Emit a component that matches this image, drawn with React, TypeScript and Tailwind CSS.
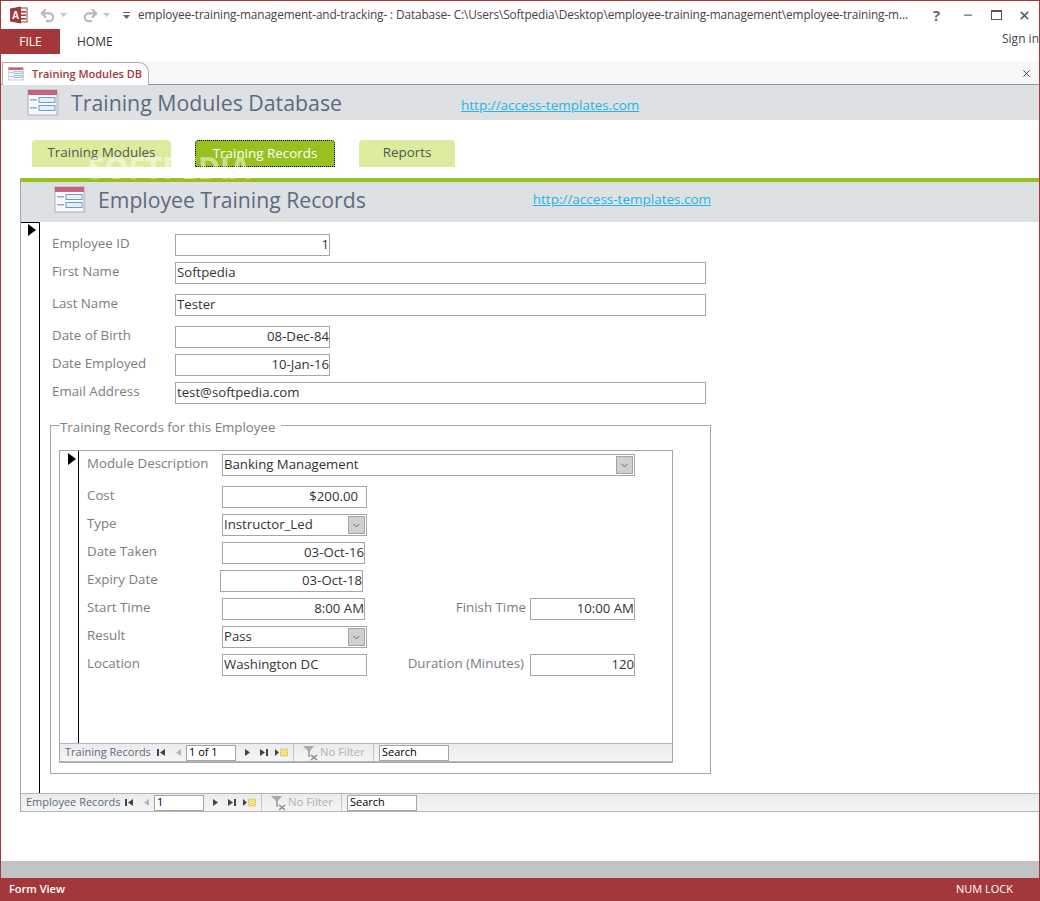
import React from "react";
import { Undo2, Redo2, X, Minus, ChevronDown } from "lucide-react";

const FormIcon = ({ className }: { className: string }) => (
  <svg viewBox="0 0 32 28" className={className}>
    <rect x="1" y="1" width="29" height="25" fill="#f7f9fc" stroke="#a7adb8" />
    <rect x="1" y="1" width="29" height="5" fill="#c9627f" />
    <rect x="30" y="3" width="1.5" height="24" fill="#c5c8cc" />
    <rect x="3" y="10" width="7" height="1.5" fill="#8fb0d0" />
    <rect x="3" y="18" width="7" height="1.5" fill="#8fb0d0" />
    <rect x="12" y="8.5" width="16" height="5" fill="#e6eef7" stroke="#6d9cc8" />
    <rect x="12" y="16.5" width="16" height="5" fill="#e6eef7" stroke="#6d9cc8" />
  </svg>
);

const AccessLogo = () => (
  <svg viewBox="0 0 18 18" className="w-[18px] h-[18px]">
    <rect x="7" y="2" width="10" height="14" fill="#fff" stroke="#a4373a" />
    <rect x="9" y="5" width="7" height="1.5" fill="#a4373a" />
    <rect x="9" y="8.5" width="7" height="1.5" fill="#a4373a" />
    <rect x="9" y="12" width="7" height="1.5" fill="#a4373a" />
    <path d="M0 2.5 L11 0.5 V17.5 L0 15.5 Z" fill="#a4373a" />
    <text x="5.5" y="13" textAnchor="middle" fontSize="10" fontWeight="700" fill="#fff" fontFamily="Liberation Sans, sans-serif">A</text>
  </svg>
);

const Caret = ({ ml }: { ml: string }) => (
  <svg viewBox="0 0 7 4" className={`w-[7px] h-[4px] ${ml} mr-[1px]`}><path d="M0 0 H7 L3.5 4 Z" fill="#c4c4c4" /></svg>
);

const Field = ({ value, w, right, pr = "pr-0", ml = "" }: { value: string; w: string; right?: boolean; pr?: string; ml?: string }) => (
  <div className={`${w} ${ml} ${pr} h-[22px] border border-[#a6a6a6] bg-white flex items-center pl-[1px] text-[13.2px] text-[#333] ${right ? "justify-end" : ""}`}>
    {value}
  </div>
);

const ComboField = ({ value, w }: { value: string; w: string }) => (
  <div className={`${w} h-[22px] border border-[#a6a6a6] bg-white flex items-center pl-[1px] text-[13.2px] text-[#333]`}>
    <span className="flex-1">{value}</span>
    <span className="w-[17px] h-[18px] mr-[1px] bg-[#d0d0d0] border border-[#a6a6a6] flex items-center justify-center">
      <ChevronDown size={11} className="text-[#555]" />
    </span>
  </div>
);

const Label = ({ text, w }: { text: string; w: string }) => (
  <div className={`${w} shrink-0 text-[13.3px] text-[#7b7d80] -mt-[3px]`}>{text}</div>
);

const NavBar = ({ label, record, labelW }: { label: string; record: string; labelW: string }) => (
  <div className="h-[19px] shrink-0 bg-gradient-to-b from-[#e9ebee] to-[#f4f5f6] border-t border-b border-[#b5b5b5] flex items-center text-[11px] text-[#5f6b78]">
    <span className={`${labelW} pl-[5px] shrink-0`}>{label}</span>
    <svg viewBox="0 0 9 9" className="w-[9px] h-[9px] text-[#444]" fill="currentColor"><rect x="0" y="1" width="2" height="7" /><path d="M8 1 V8 L3 4.5 Z" /></svg>
    <svg viewBox="0 0 9 9" className="w-[9px] h-[9px] ml-[8px] text-[#b5b5b5]" fill="currentColor"><path d="M7 1 V8 L2 4.5 Z" /></svg>
    <div className="w-[50px] h-[16px] ml-[3px] bg-white border border-[#a6a6a6] px-[2px] flex items-center text-black">{record}</div>
    <svg viewBox="0 0 9 9" className="w-[9px] h-[9px] ml-[7px] text-[#444]" fill="currentColor"><path d="M2 1 V8 L7 4.5 Z" /></svg>
    <svg viewBox="0 0 9 9" className="w-[9px] h-[9px] ml-[7px] text-[#444]" fill="currentColor"><path d="M1 1 V8 L6 4.5 Z" /><rect x="7" y="1" width="2" height="7" /></svg>
    <svg viewBox="0 0 14 9" className="w-[14px] h-[9px] ml-[7px]"><path d="M0 1 V8 L4 4.5 Z" fill="#444" /><rect x="5.5" y="1" width="7" height="7" fill="#f3df8a" stroke="#e0b020" strokeDasharray="1 1" /></svg>
    <div className="w-[1px] h-[17px] bg-[#c4c4c4] ml-[4px]" />
    <svg viewBox="0 0 16 16" className="w-[16px] h-[16px] ml-[8px]"><path d="M1 1 H12 L8 6 V12 H6 V6 Z" fill="#a9a9a9" /><path d="M9 10 L15 15 M15 10 L9 15" stroke="#8a8a8a" strokeWidth="1.5" /></svg>
    <span className="ml-[2px] w-[48px] whitespace-nowrap text-[11.3px] text-[#b3b3b3]">No Filter</span>
    <div className="w-[1px] h-[17px] bg-[#c4c4c4] ml-[5px]" />
    <div className="w-[70px] h-[16px] ml-[5px] bg-white border border-[#a6a6a6] px-[2px] flex items-center text-black">Search</div>
  </div>
);

export default function App() {
  return (
    <div className="w-[1040px] h-[901px] flex flex-col overflow-hidden bg-white border-t border-x border-[#a4373a] font-['Open_Sans',sans-serif]">
      {/* title bar */}
      <div className="h-[28px] shrink-0 flex items-center text-[12px] text-[#444]">
        <div className="ml-[9px]"><AccessLogo /></div>
        <Undo2 size={17} strokeWidth={3} className="ml-[11px] text-[#b9b9b9]" />
        <Caret ml="ml-[4px]" />
        <Redo2 size={17} strokeWidth={3} className="ml-[14px] text-[#b9b9b9]" />
        <Caret ml="ml-[4px]" />
        <svg viewBox="0 0 7 7" className="w-[7px] h-[7px] ml-[12px]"><path d="M0 0.5 H7" stroke="#666" /><path d="M0 3 H7 L3.5 7 Z" fill="#666" /></svg>
        <span className="ml-[8px] w-[772px] whitespace-nowrap overflow-hidden text-[11.8px] tracking-[-0.11px]">
          employee-training-management-and-tracking- : Database- C:\Users\Softpedia\Desktop\employee-training-management\employee-training-m...
        </span>
        <span className="ml-[23px] w-[10px] text-[15px] font-bold text-[#666]">?</span>
        <Minus size={12} strokeWidth={2.5} className="ml-[19px] text-[#666]" />
        <div className="ml-[17px] w-[11px] h-[10px] border border-[#555] border-t-2" />
        <X size={13} strokeWidth={3} className="ml-[16px] text-[#555]" />
      </div>

      {/* ribbon tabs */}
      <div className="h-[25px] shrink-0 flex items-center text-[12px]">
        <div className="w-[59px] h-full bg-[#a4373a] text-white flex items-center justify-center">FILE</div>
        <div className="ml-[17px] text-[#333]">HOME</div>
        <div className="ml-auto text-[12px] text-[#444] -mt-[6px] whitespace-nowrap w-[37px] overflow-hidden">Sign in</div>
      </div>
      <div className="h-[7px] shrink-0" />

      {/* document tab strip */}
      <div className="h-[24px] shrink-0 bg-[#f8f8f8] border-b border-[#8f959c] flex items-end">
        <div className="ml-[1px] w-[147px] h-[23px] bg-white border border-b-0 border-[#b5aea2] rounded-tr-[10px] flex items-center -mb-[1px]">
          <FormIcon className="ml-[5px] w-[16px] h-[14px]" />
          <span className="ml-[8px] text-[11px] font-semibold text-[#a4373a] whitespace-nowrap">Training Modules DB</span>
        </div>
        <X size={11} strokeWidth={2} className="ml-auto mr-[7px] mb-[5px] text-[#333]" />
      </div>

      {/* main header */}
      <div className="h-[35px] shrink-0 bg-[#dee1e3] flex items-center">
        <FormIcon className="ml-[26px] w-[32px] h-[30px]" />
        <span className="ml-[12px] text-[21.3px] text-[#5c6b7d] whitespace-nowrap">Training Modules Database</span>
        <span className="ml-[119px] mt-[5px] text-[13.5px] text-[#22b5e6] underline">http://access-templates.com</span>
      </div>

      {/* navigation buttons */}
      <div className="relative h-[58px] shrink-0 flex pt-[20px] text-[13.4px]">
        <div className="ml-[31px] w-[139px] h-[27px] pb-[2px] bg-[#dbec9f] rounded-t-[4px] flex items-center justify-center text-[#4b5a52]">Training Modules</div>
        <div className="ml-[24px] w-[140px] h-[27px] bg-[#96c11f] border border-dotted border-black rounded-t-[4px] flex items-center justify-center text-white">Training Records</div>
        <div className="ml-[24px] w-[96px] h-[27px] pb-[2px] bg-[#dbec9f] rounded-t-[4px] flex items-center justify-center text-[#4b5a52]">Reports</div>
        <span className="absolute left-[87px] top-[33px] text-[30px] leading-none font-bold text-white opacity-50 pointer-events-none">SOFTPEDIA</span>
      </div>

      {/* employee form */}
      <div className="ml-[19px] shrink-0 flex flex-col border-l border-[#a6a6a6]">
        <div className="h-[4px] bg-[#96c11f]" />
        <div className="h-[40px] pb-[5px] bg-[#dee1e3] flex items-center">
          <FormIcon className="ml-[33px] w-[32px] h-[28px]" />
          <span className="ml-[12px] text-[21.2px] text-[#5c6b7d] whitespace-nowrap">Employee Training Records</span>
          <span className="ml-[167px] text-[13.5px] text-[#22b5e6] underline">http://access-templates.com</span>
        </div>

        <div className="h-[571px] flex">
          <div className="w-[19px] shrink-0 border-r border-t border-black pl-[7px] pt-[1px]">
            <svg viewBox="0 0 8 12" className="w-[8px] h-[12px]"><path d="M0 0 L8 6 L0 12 Z" fill="#000" /></svg>
          </div>

          <div className="flex-1 flex flex-col pl-[12px] pt-[12px]">
            <div className="flex items-center"><Label text="Employee ID" w="w-[123px]" /><Field value="1" w="w-[155px]" right /></div>
            <div className="mt-[6px] flex items-center"><Label text="First Name" w="w-[123px]" /><Field value="Softpedia" w="w-[531px]" /></div>
            <div className="mt-[10px] flex items-center"><Label text="Last Name" w="w-[123px]" /><Field value="Tester" w="w-[531px]" /></div>
            <div className="mt-[10px] flex items-center"><Label text="Date of Birth" w="w-[123px]" /><Field value="08-Dec-84" w="w-[155px]" right /></div>
            <div className="mt-[6px] flex items-center"><Label text="Date Employed" w="w-[123px]" /><Field value="10-Jan-16" w="w-[155px]" right /></div>
            <div className="mt-[6px] flex items-center"><Label text="Email Address" w="w-[123px]" /><Field value="test@softpedia.com" w="w-[531px]" /></div>

            {/* training records group */}
            <fieldset className="mt-[12px] -ml-[2px] w-[661px] h-[358px] border border-[#a6a6a6] pl-[8px]">
              <legend className="ml-[1px] pr-[6px] text-[13.3px] text-[#7b7d80] leading-[18px]">
                <span className="relative top-[2px]">Training Records for this Employee</span>
              </legend>

              <div className="mt-[16px] w-[614px] h-[313px] border border-[#a6a6a6] flex flex-col">
                <div className="flex-1 flex">
                  <div className="w-[19px] shrink-0 border-r border-black pl-[8px] pt-[2px]">
                    <svg viewBox="0 0 8 12" className="w-[8px] h-[12px]"><path d="M0 0 L8 6 L0 12 Z" fill="#000" /></svg>
                  </div>
                  <div className="flex-1 flex flex-col pl-[8px] pt-[3px]">
                    <div className="flex items-center"><Label text="Module Description" w="w-[135px]" /><ComboField value="Banking Management" w="w-[413px]" /></div>
                    <div className="mt-[10px] flex items-center"><Label text="Cost" w="w-[135px]" /><Field value="$200.00" w="w-[145px]" right pr="pr-[8px]" /></div>
                    <div className="mt-[6px] flex items-center"><Label text="Type" w="w-[135px]" /><ComboField value="Instructor_Led" w="w-[145px]" /></div>
                    <div className="mt-[6px] flex items-center"><Label text="Date Taken" w="w-[135px]" /><Field value="03-Oct-16" w="w-[143px]" right /></div>
                    <div className="mt-[6px] flex items-center"><Label text="Expiry Date" w="w-[133px]" /><Field value="03-Oct-18" w="w-[143px]" right /></div>
                    <div className="mt-[6px] flex items-center">
                      <Label text="Start Time" w="w-[135px]" /><Field value="8:00 AM" w="w-[143px]" right />
                      <div className="w-[161px] text-right text-[13.3px] text-[#7b7d80] -mt-[3px]">Finish Time</div>
                      <Field value="10:00 AM" w="w-[105px]" right ml="ml-[4px]" />
                    </div>
                    <div className="mt-[6px] flex items-center"><Label text="Result" w="w-[135px]" /><ComboField value="Pass" w="w-[145px]" /></div>
                    <div className="mt-[6px] flex items-center">
                      <Label text="Location" w="w-[135px]" /><Field value="Washington DC" w="w-[145px]" />
                      <div className="w-[157px] text-right text-[13.3px] text-[#7b7d80] -mt-[3px] whitespace-nowrap">Duration (Minutes)</div>
                      <Field value="120" w="w-[105px]" right ml="ml-[6px]" />
                    </div>
                  </div>
                </div>
                <NavBar label="Training Records" record="1 of 1" labelW="w-[97px]" />
              </div>
            </fieldset>
          </div>
        </div>

        <NavBar label="Employee Records" record="1" labelW="w-[104px]" />
      </div>

      <div className="flex-1" />
      <div className="h-[17px] shrink-0 bg-[#c1c3c5]" />
      <div className="h-[23px] shrink-0 -mx-[1px] bg-[#a4373a] flex items-center text-[11px] text-white">
        <span className="ml-[9px] font-semibold">Form View</span>
        <span className="ml-auto mr-[27px]">NUM LOCK</span>
      </div>
    </div>
  );
}
